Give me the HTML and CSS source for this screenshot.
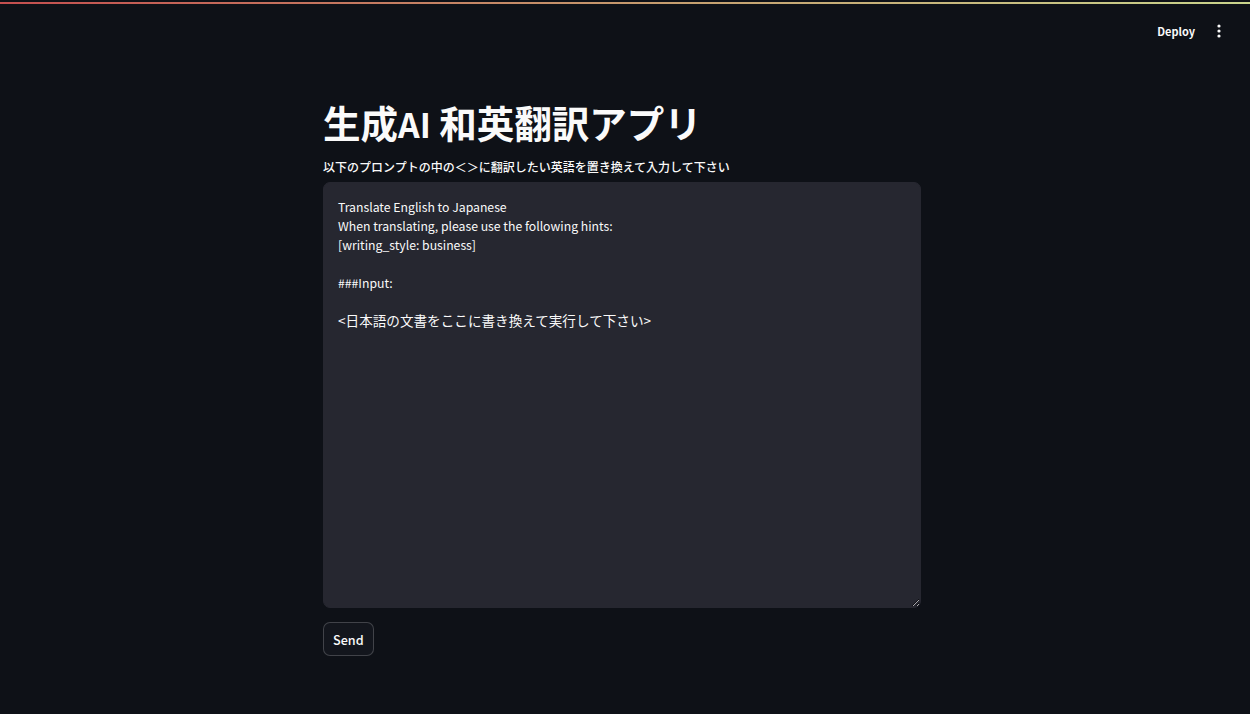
FILE: index.html
```html
<!DOCTYPE html>
<html lang="ja">
<head>
<meta charset="utf-8">
<title>生成AI 和英翻訳アプリ</title>
<link rel="stylesheet" href="styles.css">
</head>
<body>
<div class="app">
  <div class="decoration"></div>
  <header class="header">
    <button class="deploy"><span class="en">Deploy</span></button>
    <button class="menu" aria-label="menu">
      <svg width="4" height="14" viewBox="0 0 4 14"><circle cx="2" cy="2" r="1.6" fill="#fafafa"/><circle cx="2" cy="7" r="1.6" fill="#fafafa"/><circle cx="2" cy="12" r="1.6" fill="#fafafa"/></svg>
    </button>
  </header>
  <main class="main">
    <div class="block">
      <h1 class="title">生成<span class="en">AI</span> 和英翻訳アプリ</h1>
      <label class="label">以下のプロンプトの中の＜＞に翻訳したい英語を置き換えて入力して下さい</label>
      <div class="prompt" role="textbox" aria-multiline="true"><div class="line"><span class="en">Translate English to Japanese</span></div><div class="line"><span class="en">When translating, please use the following hints:</span></div><div class="line"><span class="en">[writing_style: business]</span></div><div class="line"></div><div class="line"><span class="en">###Input:</span></div><div class="line"></div><div class="line">&lt;日本語の文書をここに書き換えて実行して下さい&gt;</div></div>
      <div class="actions">
        <button class="send"><span class="en">Send</span></button>
      </div>
    </div>
  </main>
</div>
</body>
</html>
```
FILE: styles.css
```css
html, body {
  margin: 0;
  padding: 0;
  background: #0e1117;
  color: #fafafa;
  font-family: "Noto Sans CJK JP", "Noto Sans", sans-serif;
}

.app {
  min-height: 714px;
  box-sizing: border-box;
}

.en {
  font-size: 0.9em;
}

.decoration {
  height: 2px;
  margin-top: 2px;
  background: linear-gradient(90deg, #c54f4f 0%, #c6a070 55%, #c9d48c 100%);
}

.header {
  height: 56px;
  box-sizing: border-box;
  padding-bottom: 2px;
  display: flex;
  align-items: center;
  justify-content: flex-end;
  padding-right: 23px;
  gap: 4px;
}

.deploy {
  background: transparent;
  border: none;
  color: #fafafa;
  font-family: inherit;
  font-size: 12.2px;
  font-weight: 600;
  padding: 6px 12px 6px 10px;
  cursor: pointer;
}

.menu {
  background: transparent;
  border: none;
  padding: 4px 6px;
  display: flex;
  align-items: center;
  cursor: pointer;
}

.main {
  display: flex;
  justify-content: center;
  padding-right: 6px;
}

.block {
  width: 598px;
  display: flex;
  flex-direction: column;
  padding-top: 39px;
}

.title {
  margin: 0;
  height: 45px;
  font-size: 37.5px;
  line-height: 45px;
  font-weight: 700;
  letter-spacing: 0;
}

.label {
  margin-top: 15px;
  height: 16px;
  font-size: 12px;
  line-height: 16px;
  font-weight: 500;
}

.prompt {
  margin-top: 7px;
  height: 426px;
  box-sizing: border-box;
  background: #262730;
  border: 1px solid #262730;
  border-radius: 7px;
  color: #fafafa;
  font-size: 13.6px;
  line-height: 19px;
  padding: 14px 14px;
  resize: vertical;
  overflow: auto;
}

.line {
  height: 19px;
  white-space: pre;
}

.actions {
  margin-top: 14px;
  display: flex;
}

.send {
  height: 34px;
  padding: 0 9px;
  background: #13161d;
  border: 1px solid rgba(250, 250, 250, 0.2);
  border-radius: 7px;
  color: #fafafa;
  font-family: inherit;
  font-size: 14px;
  font-weight: 500;
  cursor: pointer;
}
```
